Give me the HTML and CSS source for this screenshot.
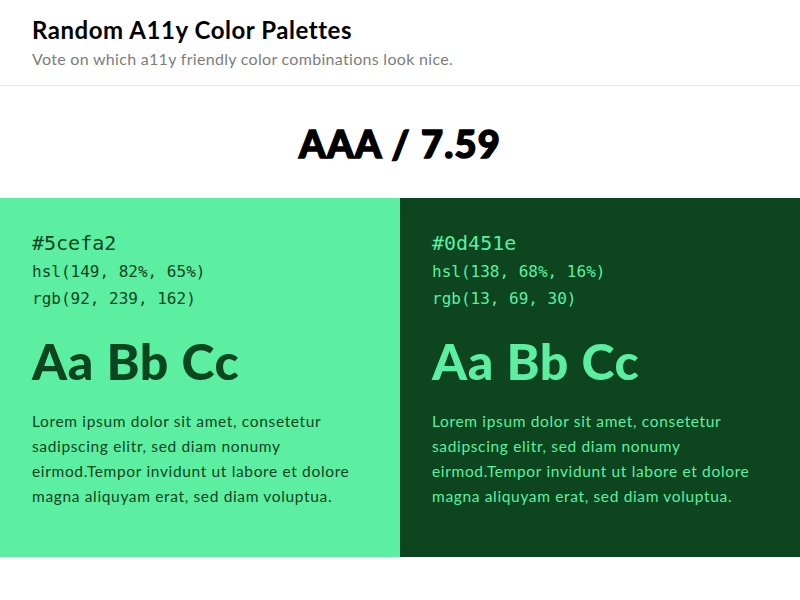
FILE: index.html
```html
<!DOCTYPE html>
<html lang="en">
<head>
<meta charset="utf-8">
<title>Random A11y Color Palettes</title>
<link rel="stylesheet" href="styles.css">
</head>
<body>
<header class="site-header">
  <h1 class="title">Random A11y Color Palettes</h1>
  <p class="subtitle">Vote on which a11y friendly color combinations look nice.</p>
</header>
<section class="score">
  <div class="score-text">AAA / 7.59</div>
</section>
<section class="palettes">
  <div class="panel panel-light">
    <div class="hex">#5cefa2</div>
    <div class="code">hsl(149, 82%, 65%)</div>
    <div class="code">rgb(92, 239, 162)</div>
    <div class="sample">Aa Bb Cc</div>
    <p class="lorem">Lorem ipsum dolor sit amet, consetetur sadipscing elitr, sed diam nonumy eirmod.Tempor invidunt ut labore et dolore magna aliquyam erat, sed diam voluptua.</p>
  </div>
  <div class="panel panel-dark">
    <div class="hex">#0d451e</div>
    <div class="code">hsl(138, 68%, 16%)</div>
    <div class="code">rgb(13, 69, 30)</div>
    <div class="sample">Aa Bb Cc</div>
    <p class="lorem">Lorem ipsum dolor sit amet, consetetur sadipscing elitr, sed diam nonumy eirmod.Tempor invidunt ut labore et dolore magna aliquyam erat, sed diam voluptua.</p>
  </div>
</section>
</body>
</html>
```
FILE: styles.css
```css
* { box-sizing: border-box; }
body {
  margin: 0;
  background: #fff;
  font-family: Lato, "Noto Sans", sans-serif;
  color: #000;
}
.site-header {
  padding: 15px 32px 0;
  height: 86px;
  border-bottom: 1px solid #e6e6e6;
}
.title {
  margin: 0;
  font-size: 24px;
  line-height: 30px;
  font-weight: 700;
  letter-spacing: 0.55px;
  color: #000;
}
.subtitle {
  margin: 0;
  font-size: 16px;
  line-height: 28px;
  letter-spacing: 0.3px;
  color: #7d7d7d;
}
.score {
  height: 112px;
  display: flex;
  align-items: center;
  justify-content: center;
}
.score-text {
  font-size: 38px;
  font-weight: 900;
  color: #000;
  -webkit-text-stroke: 1.5px #000;
  letter-spacing: 1.2px;
  padding-top: 2px;
}
.palettes {
  display: grid;
  grid-template-columns: 1fr 1fr;
  height: 359px;
}
.panel {
  padding: 30px 32px 0;
}
.panel-light { background: #5cefa2; color: #0d451e; }
.panel-dark { background: #0d451e; color: #5cefa2; }
.hex {
  font-family: "DejaVu Sans Mono", monospace;
  font-size: 20px;
  line-height: 30px;
}
.code {
  font-family: "DejaVu Sans Mono", monospace;
  font-size: 16px;
  line-height: 27px;
}
.sample {
  margin-top: 19px;
  font-size: 50px;
  font-weight: 900;
  letter-spacing: 0.6px;
  line-height: 60px;
}
.lorem {
  margin: 18px 0 0;
  font-size: 15.5px;
  line-height: 25px;
  letter-spacing: 0.65px;
  max-width: 345px;
}
```
